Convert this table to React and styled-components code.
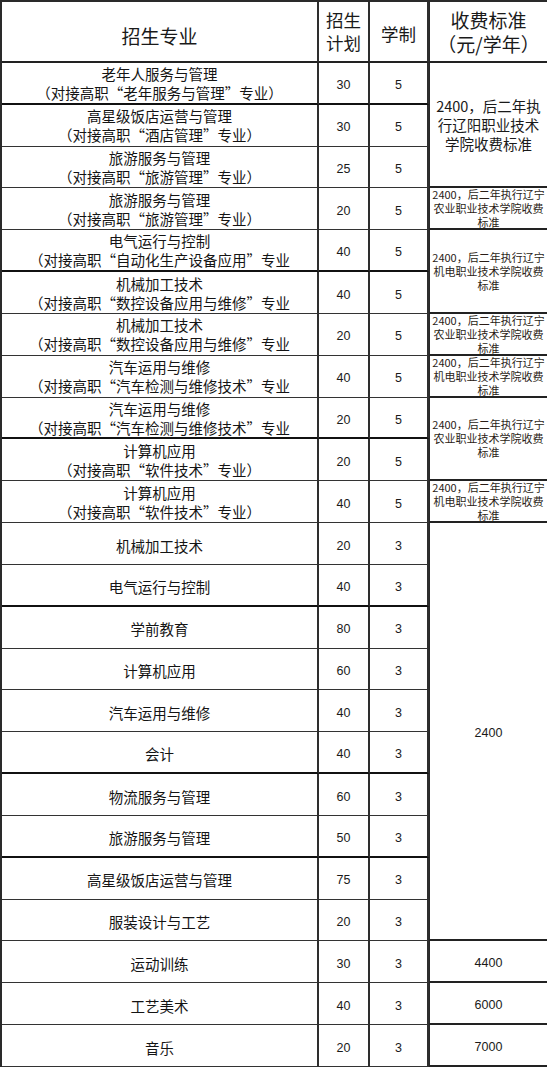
import React from "react";
import styled, { createGlobalStyle } from "styled-components";

const Global = createGlobalStyle`
  html, body { margin: 0; padding: 0; background: #fff; }
  body { font-family: "Noto Sans CJK SC", "Noto Sans", sans-serif; color: #111; }
`;

const Sheet = styled.div`
  display: grid;
  grid-template-columns: 317px 51px 59px 120px;
  grid-template-rows: 61px repeat(24, 1fr);
  width: 547px;
  height: 1067px;
  box-sizing: border-box;
  border-left: 2px solid #2a2a2a;
  border-top: 2px solid #2a2a2a;
  background: #fff;
  overflow: hidden;
`;

const Cell = styled.div`
  box-sizing: border-box;
  display: flex;
  flex-direction: column;
  align-items: center;
  justify-content: center;
  text-align: center;
  overflow: hidden;
  border-right: 2px solid #2e2e2e;
  border-bottom: ${(p) => (p.$thick ? "2px solid #111" : "1px solid #333")};
  grid-row: ${(p) => (p.$span ? `span ${p.$span}` : "auto")};
  background: #fff;
`;

const HeadCell = styled(Cell)`
  font-size: ${(p) => (p.$big ? "19px" : "17.5px")};
  line-height: 22px;
  gap: ${(p) => (p.$gap ? p.$gap : "0px")};
  padding-top: ${(p) => p.$pt || "0px"};
  color: #1a1a1a;
  border-bottom: 2px solid #222;
`;

const HeadFeeCell = styled(HeadCell)`
  border-left: 1px solid #2a2a2a;
  border-right: 2px solid #2a2a2a;
  line-height: 22px;
  white-space: nowrap;
`;

const MajorCell = styled(Cell)`
  font-size: 14.5px;
  line-height: 19px;
  padding-top: ${(p) => (p.$single ? "3px" : "0")};
  color: #141414;
  white-space: nowrap;
`;

const Sub = styled.span`
  display: block;
`;

const NumCell = styled(Cell)`
  font-family: "Liberation Sans", "DejaVu Sans", sans-serif;
  font-size: 12.5px;
  padding-top: 4px;
  color: #1a1a1a;
`;

const FeeCell = styled(Cell)`
  border-right: 2px solid #2a2a2a;
  border-left: 1px solid #2a2a2a;
  border-bottom: 2px solid #222;
  font-size: ${(p) => (p.$size === "small" ? "11px" : p.$size === "big" ? "14.5px" : "12.5px")};
  line-height: ${(p) => (p.$size === "small" ? "14px" : "19px")};
  color: ${(p) => (p.$size === "small" ? "#2a1d16" : "#1a1a1a")};
  font-family: ${(p) =>
    p.$size === "plain"
      ? `"Liberation Sans", "DejaVu Sans", sans-serif`
      : `"Noto Sans CJK SC", sans-serif`};
  white-space: nowrap;
  padding-top: ${(p) => (p.$size === "plain" ? "4px" : "0")};
`;

const Line = styled.span`
  display: block;
`;

const AGRI = ["2400，后二年执行辽宁", "农业职业技术学院收费", "标准"];
const MECH = ["2400，后二年执行辽宁", "机电职业技术学院收费", "标准"];
const LIAOYANG = ["2400，后二年执", "行辽阳职业技术", "学院收费标准"];

const rows = [
  { name: "老年人服务与管理", sub: "（对接高职“老年服务与管理”专业）", plan: 30, years: 5, thick: true, fee: { lines: LIAOYANG, span: 3, size: "big" } },
  { name: "高星级饭店运营与管理", sub: "（对接高职“酒店管理”专业）", plan: 30, years: 5 },
  { name: "旅游服务与管理", sub: "（对接高职“旅游管理”专业）", plan: 25, years: 5 },
  { name: "旅游服务与管理", sub: "（对接高职“旅游管理”专业）", plan: 20, years: 5, fee: { lines: AGRI, span: 1, size: "small" } },
  { name: "电气运行与控制", sub: "（对接高职“自动化生产设备应用”专业", plan: 40, years: 5, thick: true, fee: { lines: MECH, span: 2, size: "small" } },
  { name: "机械加工技术", sub: "（对接高职“数控设备应用与维修”专业", plan: 40, years: 5 },
  { name: "机械加工技术", sub: "（对接高职“数控设备应用与维修”专业", plan: 20, years: 5, fee: { lines: AGRI, span: 1, size: "small" } },
  { name: "汽车运用与维修", sub: "（对接高职“汽车检测与维修技术”专业", plan: 40, years: 5, fee: { lines: MECH, span: 1, size: "small" } },
  { name: "汽车运用与维修", sub: "（对接高职“汽车检测与维修技术”专业", plan: 20, years: 5, thick: true, fee: { lines: AGRI, span: 2, size: "small" } },
  { name: "计算机应用", sub: "（对接高职“软件技术”专业）", plan: 20, years: 5 },
  { name: "计算机应用", sub: "（对接高职“软件技术”专业）", plan: 40, years: 5, fee: { lines: MECH, span: 1, size: "small" } },
  { name: "机械加工技术", plan: 20, years: 3, fee: { lines: ["2400"], span: 10, size: "plain" } },
  { name: "电气运行与控制", plan: 40, years: 3, thick: true },
  { name: "学前教育", plan: 80, years: 3 },
  { name: "计算机应用", plan: 60, years: 3 },
  { name: "汽车运用与维修", plan: 40, years: 3 },
  { name: "会计", plan: 40, years: 3, thick: true },
  { name: "物流服务与管理", plan: 60, years: 3 },
  { name: "旅游服务与管理", plan: 50, years: 3, thick: true },
  { name: "高星级饭店运营与管理", plan: 75, years: 3 },
  { name: "服装设计与工艺", plan: 20, years: 3 },
  { name: "运动训练", plan: 30, years: 3, fee: { lines: ["4400"], span: 1, size: "plain" } },
  { name: "工艺美术", plan: 40, years: 3, fee: { lines: ["6000"], span: 1, size: "plain" } },
  { name: "音乐", plan: 20, years: 3, fee: { lines: ["7000"], span: 1, size: "plain" } },
];

export default function App() {
  return (
    <>
      <Global />
      <Sheet>
        <HeadCell $big $pt="8px">招生专业</HeadCell>
        <HeadCell $gap="1px">
          <Line>招生</Line>
          <Line>计划</Line>
        </HeadCell>
        <HeadCell $pt="4px">学制</HeadCell>
        <HeadFeeCell $big $gap="2px">
          <Line>收费标准</Line>
          <Line>（元/学年）</Line>
        </HeadFeeCell>
        {rows.map((r, i) => (
          <React.Fragment key={i}>
            <MajorCell $thick={r.thick} $single={!r.sub}>
              <Sub>{r.name}</Sub>
              {r.sub && <Sub>{r.sub}</Sub>}
            </MajorCell>
            <NumCell $thick={r.thick}>{r.plan}</NumCell>
            <NumCell $thick={r.thick}>{r.years}</NumCell>
            {r.fee && (
              <FeeCell $span={r.fee.span} $size={r.fee.size}>
                {r.fee.lines.map((l, j) => (
                  <Line key={j}>{l}</Line>
                ))}
              </FeeCell>
            )}
          </React.Fragment>
        ))}
      </Sheet>
    </>
  );
}
